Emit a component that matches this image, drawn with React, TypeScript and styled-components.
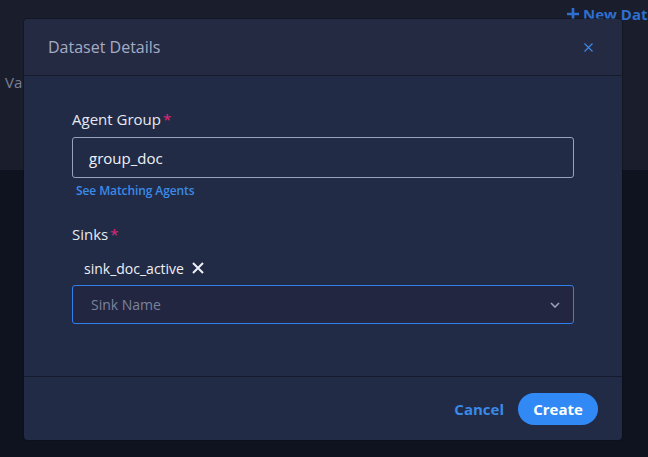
import React from 'react';
import styled, { createGlobalStyle } from 'styled-components';

const GlobalStyle = createGlobalStyle`
  html, body {
    margin: 0;
    padding: 0;
    background: #0f1320;
    font-family: 'Open Sans', 'Noto Sans', sans-serif;
  }
  * {
    box-sizing: border-box;
  }
`;

const Page = styled.div`
  width: 648px;
  height: 457px;
  overflow: hidden;
  position: relative;
  background: #0f1320;
`;

const TopBand = styled.header`
  height: 170px;
  background: #1a1d2c;
  display: flex;
  flex-direction: column;
  overflow: hidden;
`;

const TopActions = styled.div`
  display: flex;
  padding: 4px 0 0 567px;
  white-space: nowrap;
`;

const NewLink = styled.a`
  display: flex;
  align-items: center;
  gap: 4px;
  color: #2f6fcf;
  font-weight: 700;
  font-size: 15px;
  white-space: nowrap;
`;

const FaintText = styled.span`
  margin-top: 48px;
  padding-left: 5px;
  color: #7a8096;
  font-size: 15px;
`;

const Overlay = styled.div`
  position: absolute;
  inset: 0;
  display: flex;
  align-items: flex-start;
  padding: 19px 0 0 24px;
`;

const Modal = styled.section`
  width: 598px;
  border-radius: 4px;
  overflow: hidden;
  background: #222b45;
  box-shadow: 0 0 0 1px rgba(10, 12, 22, 0.4);
`;

const ModalHeader = styled.div`
  height: 57px;
  display: flex;
  align-items: center;
  justify-content: space-between;
  padding: 0 29px 0 24px;
  background: #252a43;
  border-bottom: 1px solid #161a2b;
`;

const Title = styled.h2`
  margin: 0;
  font-size: 16px;
  font-weight: 400;
  color: #a4acc4;
`;

const CloseButton = styled.button`
  background: none;
  border: none;
  padding: 0;
  display: flex;
  cursor: pointer;
`;

const ModalBody = styled.div`
  padding: 33px 48px 52px;
  display: flex;
  flex-direction: column;
`;

const Label = styled.label`
  font-size: 15px;
  line-height: 20px;
  color: #e6e9f2;

  span {
    color: #e0287a;
    margin-left: 2px;
  }
`;

const TextInput = styled.div`
  margin-top: 8px;
  height: 41px;
  border: 1px solid #9aa2ba;
  border-radius: 3px;
  display: flex;
  align-items: center;
  padding-left: 16px;
  font-size: 15px;
  color: #f0f2f8;
`;

const HelpLink = styled.a`
  margin: 5px 0 0 4px;
  font-size: 12px;
  line-height: 16px;
  font-weight: 600;
  color: #3a8ae8;
  letter-spacing: -0.1px;
`;

const Field = styled.div<{ gap?: number }>`
  display: flex;
  flex-direction: column;
  margin-top: ${({ gap }) => gap ?? 0}px;
`;

const TagRow = styled.div`
  display: flex;
  align-items: center;
  height: 24px;
  margin-top: 12px;
  padding-left: 12px;
  gap: 8px;
  font-size: 14px;
  color: #eef0f6;
`;

const Select = styled.div`
  margin-top: 5px;
  height: 39px;
  border: 1px solid #2f80ea;
  border-radius: 3px;
  background: #232640;
  display: flex;
  align-items: center;
  justify-content: space-between;
  padding: 0 13px 0 18px;
  font-size: 14px;
  color: #7b839d;
`;

const ModalFooter = styled.div`
  height: 64px;
  border-top: 1px solid #151a2c;
  display: flex;
  align-items: center;
  justify-content: flex-end;
  gap: 14px;
  padding-right: 24px;
`;

const TextButton = styled.button`
  background: none;
  border: none;
  padding: 0;
  font-family: inherit;
  font-size: 15px;
  font-weight: 700;
  color: #3a8ae8;
`;

const PrimaryButton = styled.button`
  height: 32px;
  width: 80px;
  border: none;
  border-radius: 16px;
  background: #3089f5;
  color: #ffffff;
  font-family: inherit;
  font-size: 15px;
  font-weight: 700;
`;

const App = () => (
  <Page>
    <GlobalStyle />
    <TopBand>
      <TopActions>
        <NewLink>
          <svg width="12" height="12" viewBox="0 0 12 12">
            <path d="M6 0v12M0 6h12" stroke="#2f6fcf" strokeWidth="2.6" />
          </svg>
          New Dataset
        </NewLink>
      </TopActions>
      <FaintText>Va</FaintText>
    </TopBand>
    <Overlay>
      <Modal>
        <ModalHeader>
          <Title>Dataset Details</Title>
          <CloseButton type="button" aria-label="close">
            <svg width="9" height="9" viewBox="0 0 9 9">
              <path d="M0.5 0.5l8 8M8.5 0.5l-8 8" stroke="#3a8ae8" strokeWidth="1.1" />
            </svg>
          </CloseButton>
        </ModalHeader>
        <ModalBody>
          <Field>
            <Label>
              Agent Group<span>*</span>
            </Label>
            <TextInput>group_doc</TextInput>
            <HelpLink>See Matching Agents</HelpLink>
          </Field>
          <Field gap={25}>
            <Label>
              Sinks<span>*</span>
            </Label>
            <TagRow>
              sink_doc_active
              <svg width="12" height="12" viewBox="0 0 12 12">
                <path d="M1 1l10 10M11 1L1 11" stroke="#eef0f6" strokeWidth="2" />
              </svg>
            </TagRow>
            <Select>
              Sink Name
              <svg width="10" height="6" viewBox="0 0 10 6">
                <path d="M1 1l4 4 4-4" stroke="#9aa2ba" strokeWidth="1.6" fill="none" />
              </svg>
            </Select>
          </Field>
        </ModalBody>
        <ModalFooter>
          <TextButton type="button">Cancel</TextButton>
          <PrimaryButton type="button">Create</PrimaryButton>
        </ModalFooter>
      </Modal>
    </Overlay>
  </Page>
);

export default App;
